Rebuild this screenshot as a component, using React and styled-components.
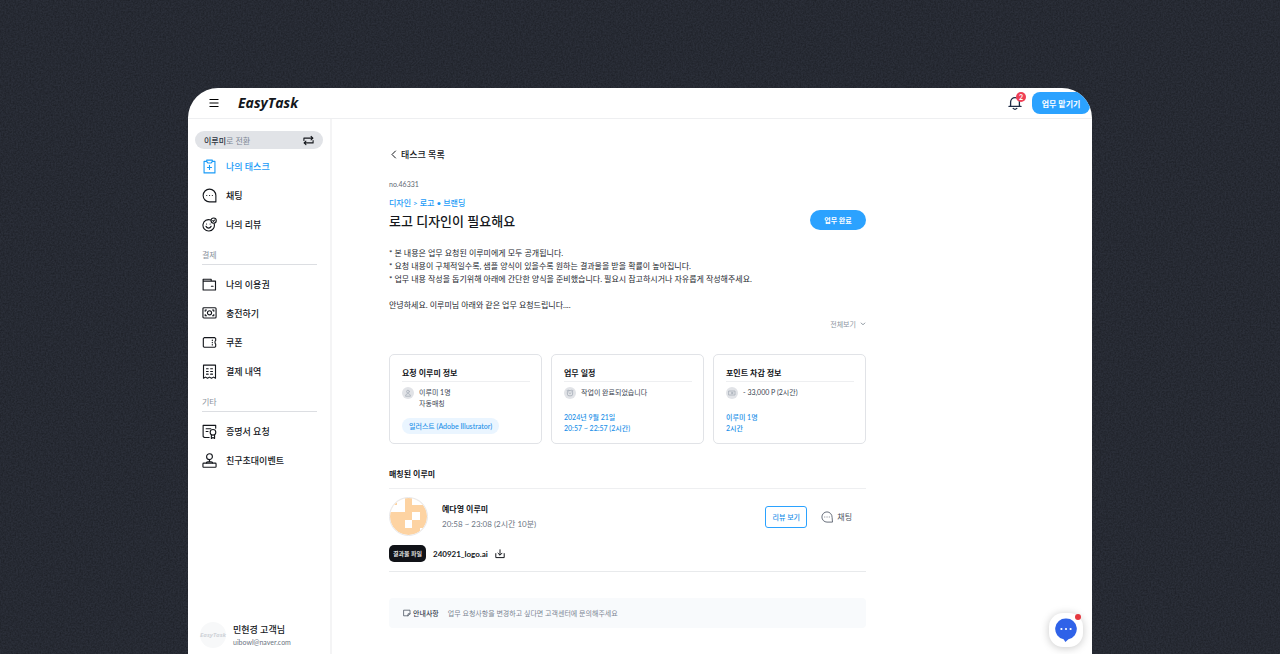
import React from "react";
import styled, { createGlobalStyle, css } from "styled-components";

const GlobalStyle = createGlobalStyle`
  *, *::before, *::after { box-sizing: border-box; }
  body {
    margin: 0;
    background: #2b2f39;
    font-family: Lato, "Noto Sans CJK KR", sans-serif;
    color: #14171c;
  }
  button { font-family: inherit; margin: 0; padding: 0; border: 0; background: none; cursor: pointer; }
  a { color: inherit; text-decoration: none; }
  h1, h2, h3, p, ul, dl, dd { margin: 0; padding: 0; font-weight: inherit; }
  svg { display: block; flex: none; }
`;

const Backdrop = styled.div`
  position: relative;
  display: flex;
  min-height: 100vh;
  padding: 88px 188px 0;
`;

const Grain = styled.svg`
  position: absolute;
  inset: 0;
  width: 100%;
  height: 100%;
`;

const Window = styled.div`
  position: relative;
  flex: 1;
  min-width: 0;
  display: flex;
  flex-direction: column;
  overflow: hidden;
  background: #fff;
  border-radius: 30px 30px 0 0;
`;

const Header = styled.header`
  display: flex;
  align-items: center;
  height: 31px;
  padding: 0 2px 0 21px;
  border-bottom: 1px solid #eeeff1;
`;

const Logo = styled.a`
  margin-left: 19px;
  font: italic 700 14px/18px "Open Sans", sans-serif;
`;

const HeaderActions = styled.div`
  display: flex;
  align-items: center;
  gap: 10px;
  margin-left: auto;
`;

const BellButton = styled.button`
  position: relative;
  color: #1d2b45;
`;

const Count = styled.span`
  position: absolute;
  top: -4px;
  right: -4px;
  width: 10px;
  height: 10px;
  border-radius: 50%;
  background: #ef4056;
  color: #fff;
  font-size: 7px;
  font-weight: 700;
  line-height: 10px;
  text-align: center;
`;

const SolidButton = styled.button`
  flex: none;
  width: ${(p) => (p.$wide ? 58 : 56)}px;
  height: ${(p) => (p.$wide ? 22 : 20)}px;
  border-radius: ${(p) => (p.$wide ? 8 : 10)}px;
  background: #2ba2ff;
  color: #fff;
  font-size: ${(p) => (p.$wide ? 8 : 7)}px;
  font-weight: 700;
`;

const Body = styled.div`
  flex: 1;
  display: flex;
`;

const Sidebar = styled.aside`
  flex: none;
  display: flex;
  flex-direction: column;
  width: 144px;
  padding: 12px 7px 6px;
  border-right: 2px solid #f4f4f5;
`;

const SwitchButton = styled.button`
  display: flex;
  align-items: center;
  justify-content: space-between;
  width: 100%;
  height: 18px;
  margin-bottom: 3px;
  padding: 0 9px;
  border-radius: 9px;
  background: #e1e3e7;
  color: #7c8694;
  font-size: 8px;
  strong { color: #2d3440; font-weight: 500; }
  svg { color: #14171c; }
`;

const NavItem = styled.a`
  display: flex;
  align-items: center;
  gap: 9px;
  height: 29px;
  padding-left: 7px;
  color: ${(p) => (p.$active ? "#1a9bf7" : "#14171c")};
  font-size: 9px;
  font-weight: 500;
`;

const NavHeading = styled.h2`
  height: 26px;
  margin: 0 6px 5px 7px;
  padding-top: 10px;
  border-bottom: 1px solid #dcdee2;
  color: #8b939e;
  font-size: 8px;
  line-height: 12px;
`;

const Account = styled.div`
  display: flex;
  align-items: center;
  gap: 7px;
  margin-top: auto;
  padding-left: 5px;
`;

const AccountMark = styled.span`
  width: 26px;
  height: 26px;
  border-radius: 50%;
  background: #f7f8f9;
  color: #cfd3d8;
  font: italic 700 6px/26px "Open Sans", sans-serif;
  text-align: center;
`;

const AccountName = styled.p`
  font-size: 9px;
  font-weight: 500;
  line-height: 13px;
`;

const AccountMail = styled.p`
  color: #6b7482;
  font-size: 7px;
  line-height: 12px;
`;

const Main = styled.main`
  flex: 1;
  min-width: 0;
  padding: 29px 57px 25px;
`;

const Content = styled.div`
  max-width: 477px;
`;

const BackLink = styled.a`
  display: flex;
  align-items: center;
  gap: 3px;
  font-size: 9px;
  font-weight: 500;
  line-height: 13px;
`;

const TaskNumber = styled.p`
  margin-top: 18px;
  color: #5f6873;
  font-size: 7px;
  line-height: 10px;
`;

const TaskHead = styled.div`
  display: flex;
  align-items: flex-end;
  justify-content: space-between;
  margin-top: 8px;
`;

const Category = styled.p`
  color: #1a9bf7;
  font-size: 8px;
  font-weight: 500;
  line-height: 12px;
`;

const Title = styled.h1`
  margin-top: 3px;
  font-size: 13px;
  font-weight: 500;
  line-height: 18px;
`;

const Description = styled.p`
  margin-top: 17px;
  color: #23272e;
  font-size: 8px;
  line-height: 13px;
  white-space: pre-line;
`;

const MoreButton = styled.button`
  display: flex;
  align-items: center;
  gap: 4px;
  margin: 6px 0 0 auto;
  color: #8b939e;
  font-size: 7px;
  line-height: 12px;
`;

const Cards = styled.div`
  display: grid;
  grid-template-columns: repeat(3, 1fr);
  gap: 9px;
  margin-top: 24px;
`;

const Card = styled.section`
  display: flex;
  flex-direction: column;
  align-items: flex-start;
  min-height: 90px;
  padding: 12px 11px 9px 12px;
  border: 1px solid #e1e3e7;
  border-radius: 5px;
`;

const CardTitle = styled.h3`
  width: 100%;
  padding-bottom: 2px;
  border-bottom: 1px solid #eeeff1;
  font-size: 8px;
  font-weight: 700;
  line-height: 12px;
`;

const CardRow = styled.div`
  display: flex;
  gap: 5px;
  margin-top: 5px;
  color: #3a4452;
  font-size: 7px;
  line-height: 11px;
`;

const RoundIcon = styled.span`
  display: grid;
  place-items: center;
  width: 12px;
  height: 12px;
  border-radius: 50%;
  background: #e1e3e7;
  color: #a6adb8;
`;

const blueNote = css`
  margin-top: auto;
  color: #1a8fe8;
  font-size: 7px;
  font-weight: 500;
`;

const CardNote = styled.p`
  ${blueNote}
  line-height: 11px;
`;

const Tag = styled.span`
  ${blueNote}
  padding: 0 7px;
  border-radius: 8px;
  background: #eaf5ff;
  line-height: 16px;
`;

const SectionTitle = styled.h2`
  margin-top: 23px;
  padding-bottom: 7px;
  border-bottom: 1px solid #eeeff1;
  font-size: 8px;
  font-weight: 700;
  line-height: 14px;
`;

const Match = styled.div`
  padding: 8px 0 9px;
  border-bottom: 1px solid #e8eaec;
`;

const Person = styled.div`
  display: flex;
  align-items: center;
`;

const PersonText = styled.div`
  margin: 0 auto 0 14px;
`;

const PersonName = styled.p`
  font-size: 8px;
  font-weight: 700;
  line-height: 15px;
`;

const PersonTime = styled.p`
  color: #6b7482;
  font-size: 8px;
  line-height: 15px;
`;

const OutlineButton = styled.button`
  width: 42px;
  height: 22px;
  margin-right: 14px;
  border: 1px solid #2ba2ff;
  border-radius: 3px;
  color: #1a8fe8;
  font-size: 7px;
  font-weight: 500;
`;

const ChatButton = styled.button`
  display: flex;
  align-items: center;
  gap: 4px;
  margin-right: 14px;
  color: #4a5361;
  font-size: 8px;
`;

const FileRow = styled.div`
  display: flex;
  align-items: center;
  margin-top: 9px;
`;

const FileBadge = styled.span`
  width: 37px;
  border-radius: 5px;
  background: #111318;
  color: #fff;
  font-size: 6px;
  font-weight: 500;
  line-height: 17px;
  text-align: center;
`;

const FileLink = styled.a`
  display: flex;
  align-items: center;
  gap: 7px;
  margin-left: 7px;
  font-size: 8px;
  font-weight: 700;
`;

const Notice = styled.dl`
  display: flex;
  align-items: center;
  gap: 9px;
  height: 30px;
  margin-top: 26px;
  padding: 0 14px;
  border-radius: 4px;
  background: #f8fafc;
  color: #7c8694;
  font-size: 7px;
  line-height: 10px;
  dt { display: flex; align-items: center; gap: 2px; color: #3a4452; font-weight: 500; }
`;

const ChatFab = styled.button`
  position: absolute;
  right: 9px;
  bottom: 7px;
  display: grid;
  place-items: center;
  width: 34px;
  height: 34px;
  border-radius: 14px;
  background: #fff;
  box-shadow: 0 1px 8px rgba(0, 0, 0, 0.22);
  &::after {
    content: "";
    position: absolute;
    top: 1px;
    right: 2px;
    width: 6px;
    height: 6px;
    border-radius: 50%;
    background: #e5383f;
  }
`;

const Icon = ({ size = 14, box = 16, width = 1.2, children, ...rest }) => (
  <svg width={size} height={size} viewBox={`0 0 ${box} ${box}`} fill="none" stroke="currentColor"
    strokeWidth={width} strokeLinecap="round" strokeLinejoin="round" aria-hidden="true" {...rest}>
    {children}
  </svg>
);

const icons = {
  task: (
    <>
      <path d="M5 2.5H2.2v12.3h11.6V2.5H11" />
      <path d="M5 1.2h6v1.6L9.8 4.2H6.2L5 2.8ZM8 6.8v4.4M5.8 9h4.4" />
    </>
  ),
  chat: <path d="M14.8 14.8H8A6.8 6.8 0 1 1 14.8 8ZM5 8h.1M8 8h.1M11 8h.1" />,
  review: (
    <>
      <path d="M9.4 3.2A6.1 6.1 0 1 0 13 7.2" />
      <circle cx="12.4" cy="3.8" r="2.8" />
      <path d="m11.4 3.8.8.8 1.2-1.4M4.8 7.4h.1M8.6 7.4h.1M4.3 10c1.2 2.4 4.2 2.4 5.4 0" />
    </>
  ),
  wallet: <path d="M1.2 13.8V2.4h8.6v2h4.6v9.4ZM1.2 4.4h8.6M10 9.8h1.8" />,
  cash: (
    <>
      <rect x="1" y="1.8" width="14" height="11" rx="1" />
      <circle cx="8" cy="7.3" r="2.2" />
      <path d="M3.4 5.6V4.2h1.4M12.6 5.6V4.2h-1.4M3.4 9v1.4h1.4M12.6 9v1.4h-1.4" />
    </>
  ),
  coupon: (
    <>
      <path d="M2.4 2.8h11.2l1 1v2.1c-1 .4-1 3.2 0 3.6v2.6l-1 1H2.4l-1-1V3.8Z" />
      <path d="M11 5.4v.4M11 7.8v.4M11 10.2v.4" />
    </>
  ),
  receipt: (
    <>
      <path d="M1.6 1.2h12.8v14l-2.1-1.2-2.2 1.2L8 14l-2.1 1.2L3.7 14l-2.1 1.2Z" />
      <path d="M4.8 5h1.8M9.2 5h2M4.8 8h1.8M9.2 8h2M4.8 10.8h1.8M9.2 10.8h2" />
    </>
  ),
  certificate: (
    <>
      <path d="M7.6 14.4H2.4l-1.2-1.2V1.4h13.4v3M4.4 5h5M4.4 8h2" />
      <circle cx="11.7" cy="8.8" r="3" />
      <path d="M10 11.4v4l1.7-1 1.7 1v-4" />
    </>
  ),
  stamp: (
    <>
      <circle cx="8" cy="3.9" r="3.1" />
      <path d="M8 7v2.6M4.8 10.6c0-1.4 1.2-1.4 3.2-1.4s3.2 0 3.2 1.4" />
      <rect x="1" y="10.8" width="14" height="4.4" rx=".8" />
    </>
  ),
};

const NavLink = ({ icon, active, children }) => (
  <NavItem href="#" $active={active} aria-current={active ? "page" : undefined}>
    <Icon size={15}>{icons[icon]}</Icon>
    {children}
  </NavItem>
);

const Portrait = () => (
  <svg width="39" height="39" viewBox="0 0 39 39" aria-hidden="true">
    <defs>
      <clipPath id="portrait"><circle cx="19.5" cy="19.5" r="18.5" /></clipPath>
    </defs>
    <g clipPath="url(#portrait)">
      <rect width="39" height="39" fill="#fdd3a2" />
      <path fill="#fff" d="M8 0h8v15H0V8h8ZM23 0h16v8H23ZM23 15h8v8h-8ZM16 23h7v8h-7ZM31 31h8v8h-8Z" />
    </g>
    <circle cx="19.5" cy="19.5" r="19" fill="none" stroke="#e8e8ea" />
  </svg>
);

const DESCRIPTION = `* 본 내용은 업무 요청된 이루미에게 모두 공개됩니다.
* 요청 내용이 구체적일수록, 샘플 양식이 있을수록 원하는 결과물을 받을 확률이 높아집니다.
* 업무 내용 작성을 돕기위해 아래에 간단한 양식을 준비했습니다. 필요시 참고하시거나 자유롭게 작성해주세요.

안녕하세요. 이루미님 아래와 같은 업무 요청드립니다....`;

export default function App() {
  return (
    <>
      <GlobalStyle />
      <Backdrop lang="ko">
        <Grain aria-hidden="true">
          <filter id="grain">
            <feTurbulence type="fractalNoise" baseFrequency="0.6" numOctaves="2" seed="4" />
            <feColorMatrix values="0 0 0 0 0  0 0 0 0 0  0 0 0 0 0  1 0 0 0 -0.3" />
          </filter>
          <rect width="100%" height="100%" filter="url(#grain)" opacity="0.5" />
        </Grain>
        <Window>
          <Header>
            <button type="button" aria-label="메뉴">
              <Icon size={10} box={10} strokeLinecap="butt"><path d="M.5 1.5h9M.5 5h9M.5 8.5h9" /></Icon>
            </button>
            <Logo href="#">EasyTask</Logo>
            <HeaderActions>
              <BellButton type="button" aria-label="알림">
                <Icon size={14} box={14} width={1.3}>
                  <path d="M1 10.4h12M2.6 10.4V6a4.4 4.4 0 0 1 8.8 0v4.4M5.2 12.4q1.8 1.8 3.6 0" />
                </Icon>
                <Count>2</Count>
              </BellButton>
              <SolidButton type="button" $wide>업무 맡기기</SolidButton>
            </HeaderActions>
          </Header>
          <Body>
            <Sidebar>
              <SwitchButton type="button">
                <span><strong>이루미</strong>로 전환</span>
                <Icon size={11} box={12} width={1.2}>
                  <path d="M1 6V3.4h9.6M8.8 1.4l2 2-2 2M11 6v2.6H1.4M3.2 6.6l-2 2 2 2" />
                </Icon>
              </SwitchButton>
              <nav>
                <NavLink icon="task" active>나의 태스크</NavLink>
                <NavLink icon="chat">채팅</NavLink>
                <NavLink icon="review">나의 리뷰</NavLink>
                <NavHeading>결제</NavHeading>
                <NavLink icon="wallet">나의 이용권</NavLink>
                <NavLink icon="cash">충전하기</NavLink>
                <NavLink icon="coupon">쿠폰</NavLink>
                <NavLink icon="receipt">결제 내역</NavLink>
                <NavHeading>기타</NavHeading>
                <NavLink icon="certificate">증명서 요청</NavLink>
                <NavLink icon="stamp">친구초대이벤트</NavLink>
              </nav>
              <Account>
                <AccountMark>EasyTask</AccountMark>
                <div>
                  <AccountName>민현경 고객님</AccountName>
                  <AccountMail>uibowl@naver.com</AccountMail>
                </div>
              </Account>
            </Sidebar>
            <Main>
              <Content>
                <BackLink href="#">
                  <Icon size={9} box={9} width={1}><path d="M6.5 1 3 4.5 6.5 8" /></Icon>
                  태스크 목록
                </BackLink>
                <TaskNumber>no.46331</TaskNumber>
                <TaskHead>
                  <div>
                    <Category>디자인 &gt; 로고 • 브랜딩</Category>
                    <Title>로고 디자인이 필요해요</Title>
                  </div>
                  <SolidButton type="button">업무 완료</SolidButton>
                </TaskHead>
                <Description>{DESCRIPTION}</Description>
                <MoreButton type="button">
                  전체보기
                  <Icon size={6} box={6} width={1}><path d="M1.2 2 3 3.8 4.8 2" /></Icon>
                </MoreButton>
                <Cards>
                  <Card>
                    <CardTitle>요청 이루미 정보</CardTitle>
                    <CardRow>
                      <RoundIcon>
                        <Icon size={8} box={8} width={0.8}><circle cx="4" cy="2.6" r="1.4" /><path d="M1.6 6.8c0-3 4.8-3 4.8 0Z" /></Icon>
                      </RoundIcon>
                      <div>이루미 1명<br />자동매칭</div>
                    </CardRow>
                    <Tag>일러스트 (Adobe Illustrator)</Tag>
                  </Card>
                  <Card>
                    <CardTitle>업무 일정</CardTitle>
                    <CardRow>
                      <RoundIcon>
                        <Icon size={8} box={8} width={0.8}><rect x="1.4" y="1.6" width="5.2" height="5.2" rx="1.6" /><path d="M1 1.8 1.8 1M7 1.8 6.2 1M3 3.8l1 .8 1-.8" /></Icon>
                      </RoundIcon>
                      <div>작업이 완료되었습니다</div>
                    </CardRow>
                    <CardNote>2024년 9월 21일<br />20:57 ~ 22:57 (2시간)</CardNote>
                  </Card>
                  <Card>
                    <CardTitle>포인트 차감 정보</CardTitle>
                    <CardRow>
                      <RoundIcon>
                        <Icon size={8} box={8} width={0.8}><rect x="1" y="2" width="6" height="4" /><circle cx="4" cy="4" r=".8" /></Icon>
                      </RoundIcon>
                      <div>- 33,000 P (2시간)</div>
                    </CardRow>
                    <CardNote>이루미 1명<br />2시간</CardNote>
                  </Card>
                </Cards>
                <SectionTitle>매칭된 이루미</SectionTitle>
                <Match>
                  <Person>
                    <Portrait />
                    <PersonText>
                      <PersonName>예다영 이루미</PersonName>
                      <PersonTime>20:58 ~ 23:08 (2시간 10분)</PersonTime>
                    </PersonText>
                    <OutlineButton type="button">리뷰 보기</OutlineButton>
                    <ChatButton type="button">
                      <Icon size={12} width={1.1}>{icons.chat}</Icon>
                      채팅
                    </ChatButton>
                  </Person>
                  <FileRow>
                    <FileBadge>결과물 파일</FileBadge>
                    <FileLink href="#">
                      240921_logo.ai
                      <Icon size={10} box={10} width={1}><path d="M.8 4.6v4h8.4v-4M5 .8v5M3 4.2l2 2 2-2" /></Icon>
                    </FileLink>
                  </FileRow>
                </Match>
                <Notice>
                  <dt>
                    <Icon size={8} box={8} width={0.7}><path d="M1 1.2h6v3.6L5 6.8H1ZM7 4.8H5v2" /></Icon>
                    안내사항
                  </dt>
                  <dd>업무 요청사항을 변경하고 싶다면 고객센터에 문의해주세요</dd>
                </Notice>
              </Content>
            </Main>
          </Body>
          <ChatFab type="button" aria-label="채팅 상담">
            <svg width="22" height="24" viewBox="0 0 22 24" aria-hidden="true">
              <path d="M11 .6a10.4 10.4 0 0 1 2.4 20.6L10.4 24 8.6 21.2A10.4 10.4 0 0 1 11 .6Z" fill="#2f62e8" />
              <g fill="#fff"><circle cx="6.4" cy="11" r="1.1" /><circle cx="11" cy="11" r="1.1" /><circle cx="15.6" cy="11" r="1.1" /></g>
            </svg>
          </ChatFab>
        </Window>
      </Backdrop>
    </>
  );
}
